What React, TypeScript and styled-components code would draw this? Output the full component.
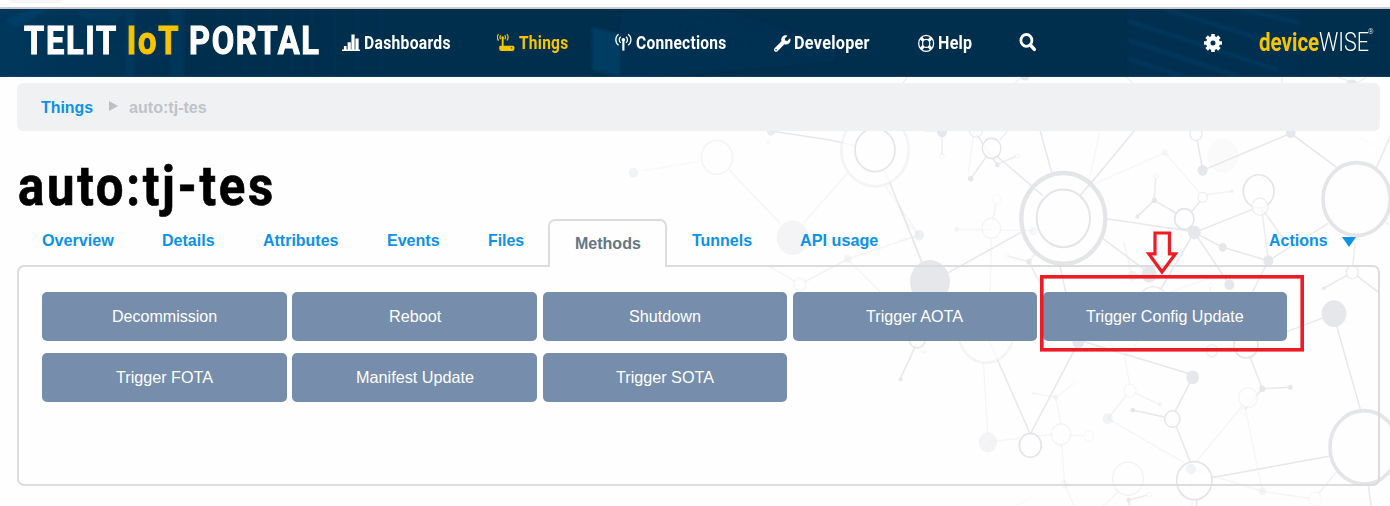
import React, { useLayoutEffect, useRef, useState } from "react";
import styled, { createGlobalStyle } from "styled-components";
import { FaWrench } from "react-icons/fa";

const GlobalStyle = createGlobalStyle`
  * { box-sizing: border-box; }
  html, body { margin: 0; padding: 0; background: #fff; }
  body { font-family: "Liberation Sans", Arial, sans-serif; overflow: hidden; }
`;

const Page = styled.div`
  position: relative;
  width: 1390px;
  height: 506px;
  overflow: hidden;
  background: #fefefe;
`;

const FitBox = styled.span<{ $w: number }>`
  display: inline-block;
  width: ${(p) => p.$w}px;
  white-space: nowrap;
`;
const FitInner = styled.span`
  display: inline-block;
  transform-origin: 0 50%;
`;
function Fit({ w, children }: { w: number; children: React.ReactNode }) {
  const ref = useRef<HTMLSpanElement>(null);
  const [scale, setScale] = useState(1);
  useLayoutEffect(() => {
    if (ref.current) setScale(w / ref.current.offsetWidth);
  }, [w]);
  return (
    <FitBox $w={w}>
      <FitInner ref={ref} style={{ transform: `scaleX(${scale})` }}>
        {children}
      </FitInner>
    </FitBox>
  );
}

const Backdrop = styled.svg`
  position: absolute;
  inset: 0;
  width: 1390px;
  height: 506px;
`;

const Content = styled.div`
  position: relative;
  display: flex;
  flex-direction: column;
`;

const BrowserEdge = styled.div`
  height: 9px;
  padding-left: 11px;
  background: #fff;
  border-bottom: 2px solid #c9cbce;
`;
const BrowserPill = styled.div`
  width: 50px;
  height: 3px;
  border-radius: 0 0 6px 6px;
  background: #f5f5f6;
`;

const Header = styled.header`
  position: relative;
  height: 68px;
  background: #002e4d;
  border-bottom: 1px solid #0b3d5e;
  overflow: hidden;
`;
const HeaderArt = styled.svg`
  position: absolute;
  inset: 0;
  width: 1390px;
  height: 68px;
`;
const HeaderGrid = styled.div`
  position: relative;
  height: 68px;
  padding-left: 24px;
  display: grid;
  grid-template-columns: 318px 155px 118px 159px 144px 101px 185px 55px 1fr;
  align-items: center;
  font-family: Roboto, sans-serif;
  color: #fff;
`;
const Logo = styled.div`
  font-size: 39px;
  line-height: 48px;
  font-weight: 700;
  letter-spacing: 2px;
  padding-bottom: 5px;
  -webkit-text-stroke: 1.1px currentColor;
`;
const Gold = styled.span`
  color: #f6c500;
`;
const NavItem = styled.a<{ $active?: boolean }>`
  display: flex;
  align-items: center;
  gap: 3px;
  height: 24px;
  font-size: 17.5px;
  line-height: 24px;
  font-weight: 700;
  letter-spacing: 0.3px;
  color: ${(p) => (p.$active ? "#f6c500" : "#fff")};
`;
const IconSlot = styled.span<{ $w: number }>`
  display: flex;
  flex: none;
  width: ${(p) => p.$w}px;
  height: 20px;
  align-items: center;
`;
const Brand = styled.div`
  display: flex;
  align-items: flex-start;
  height: 30px;
  font-size: 25px;
  line-height: 30px;
  font-weight: 300;
`;
const BrandBold = styled.span`
  font-weight: 700;
  color: #f6c500;
`;
const Registered = styled.span`
  font-size: 7px;
  line-height: 9px;
  margin-left: -1px;
`;

const Breadcrumb = styled.nav`
  margin: 6px 10px 0 17px;
  height: 48px;
  padding-left: 24px;
  display: flex;
  align-items: center;
  border-radius: 6px;
  background: #f0f1f3;
  font-size: 16.5px;
  font-weight: 700;
  color: #bdc3c8;
`;
const CrumbLink = styled.a`
  color: #0c92e6;
`;
const CrumbArrow = styled.span`
  width: 0;
  height: 0;
  margin: 0 11px 2px 16px;
  border-left: 9px solid #b9c0c6;
  border-top: 5.5px solid transparent;
  border-bottom: 5.5px solid transparent;
`;

const Title = styled.h1`
  margin: 22px 0 0 18px;
  height: 66px;
  font-family: Roboto, sans-serif;
  font-size: 55px;
  line-height: 66px;
  font-weight: 700;
  letter-spacing: 3px;
  color: #000;
  -webkit-text-stroke: 0.7px #000;
`;

const TabBar = styled.div`
  display: flex;
  align-items: flex-end;
  height: 48px;
  margin: 0 10px -2px 17px;
  padding-left: 25px;
  position: relative;
  z-index: 1;
  font-size: 16.5px;
  font-weight: 700;
  color: #0c92e6;
`;
const Tab = styled.a<{ $w: number }>`
  width: ${(p) => p.$w}px;
  height: 48px;
  line-height: 42px;
`;
const ActiveTab = styled.div`
  width: 119px;
  height: 48px;
  margin-right: 25px;
  padding-left: 25px;
  line-height: 44px;
  border: 2px solid #dcdcdc;
  border-bottom: 0;
  border-radius: 7px 7px 0 0;
  background: #fefefe;
  color: #657684;
`;
const Actions = styled.a`
  margin-left: auto;
  margin-right: 24px;
  height: 48px;
  display: flex;
  align-items: center;
  gap: 14px;
  padding-bottom: 6px;
`;
const Caret = styled.span`
  width: 0;
  height: 0;
  border-top: 10.5px solid #0c92e6;
  border-left: 7px solid transparent;
  border-right: 7px solid transparent;
  margin-top: 3px;
`;

const Panel = styled.section`
  margin: 0 10px 0 17px;
  height: 221px;
  padding: 25px 0 0 23.4px;
  border: 2px solid #dcdcdc;
  border-radius: 7px;
`;
const Methods = styled.div`
  display: grid;
  grid-template-columns: repeat(5, 244.6px);
  grid-auto-rows: 48.5px;
  column-gap: 5.5px;
  row-gap: 12.5px;
`;
const MethodButton = styled.button`
  border: 0;
  padding: 0;
  border-radius: 5px;
  background: #768eac;
  color: #fff;
  font-family: "Liberation Sans", Arial, sans-serif;
  font-size: 16.5px;
  text-align: center;
`;

const Annotation = styled.svg`
  position: absolute;
  left: 1036px;
  top: 226px;
  width: 272px;
  height: 130px;
`;

type Node = [x: number, y: number, r: number, stroke: number, opacity: number];
type Edge = [x1: number, y1: number, x2: number, y2: number, opacity: number];

/* Node: stroke 0 is a filled dot. Every cluster is drawn at three times its size. */
const upperEdges: Edge[] = [
  [455, 127, 420, 0, 1], [575, 157, 705, 0, 1], [540, 197, 578, 152, 1], [430, 198, 290, 78, 1],
  [290, 103, 352, 78, 0.8], [292, 105, 228, 10, 1], [212, 146, 262, 76, 1], [300, 30, 322, 3, 0.7],
  [126, 10, 126, 80, 0.8], [222, 0, 205, 130, 0.35], [600, 0, 570, 140, 0.25], [580, 163, 795, 68, 0.35],
  [795, 68, 900, 190, 0.35], [890, 20, 908, 121, 1], [908, 121, 1172, 10, 1], [1172, 10, 1310, 112, 1],
  [1430, 112, 1470, 20, 0.9], [767, 138, 763, 211, 0.8], [763, 211, 712, 260, 1], [763, 211, 830, 250, 1],
  [875, 245, 905, 208, 1], [910, 195, 996, 184, 0.5], [620, 266, 883, 305, 1], [890, 305, 1065, 235, 1],
  [1085, 235, 1105, 392, 0.8], [1085, 235, 1150, 325, 0.9], [883, 307, 968, 352, 1], [968, 352, 1105, 392, 1],
  [883, 307, 988, 464, 1], [1105, 392, 1285, 280, 0.9], [883, 307, 775, 490, 1], [803, 305, 748, 430, 0.4],
  [608, 325, 748, 430, 1], [145, 428, 362, 308, 1], [0, 230, 65, 395, 1], [170, 298, 400, 302, 0.35],
  [290, 208, 275, 290, 0.5], [274, 325, 270, 490, 0.35], [320, 377, 387, 395, 0.7], [387, 395, 410, 365, 0.8],
  [387, 395, 420, 460, 0.8], [480, 410, 498, 490, 1], [0, 333, 57, 316, 0.35], [57, 316, 15, 270, 0.3],
  [697, 437, 672, 340, 0.4], [697, 437, 800, 402, 0.3], [1105, 392, 1055, 490, 0.9], [1365, 340, 1358, 410, 0.8],
  [1357, 427, 1271, 475, 1], [1357, 427, 1437, 488, 1], [1470, 285, 1440, 268, 0.6], [932, 466, 930, 500, 0.4],
  [800, 490, 940, 440, 0.3], [75, 3, 126, 3, 0.7], [1370, 20, 1470, 70, 0.15],
];
const upperNodes: Node[] = [
  [490, 265, 126, 13, 1], [490, 265, 80, 6, 1], [1370, 207, 101, 11, 1], [275, 55, 28, 4, 1],
  [228, 0, 20, 4, 0.7], [126, 6, 15, 0, 1], [126, 80, 7, 2, 0.6], [292, 104, 7, 0, 1],
  [352, 78, 6, 2, 0.5], [212, 146, 8, 0, 1], [888, 12, 18, 4, 0.8], [969, 77, 47, 0, 0.15],
  [908, 121, 15, 0, 1], [1172, 8, 15, 0, 1], [795, 68, 10, 0, 0.25], [767, 138, 6, 2, 0.5],
  [763, 211, 8, 0, 1], [712, 260, 6, 0, 0.9], [908, 202, 14, 3, 0.8], [996, 184, 5, 0, 0.5],
  [853, 267, 29, 5, 1], [883, 307, 19, 0, 1], [1076, 184, 46, 5, 1], [1080, 230, 24, 4, 0.6],
  [968, 352, 12, 0, 1], [1105, 392, 15, 0, 1], [988, 464, 15, 0, 1], [748, 433, 23, 0, 1],
  [697, 437, 14, 0, 0.5], [672, 340, 4, 0, 0.3], [90, 455, 60, 0, 1], [290, 208, 13, 2, 0.4],
  [274, 295, 28, 4, 0.4], [170, 298, 7, 0, 0.4], [400, 303, 12, 0, 0.3], [57, 316, 15, 0, 0.5],
  [320, 377, 6, 2, 0.4], [387, 395, 8, 0, 0.9], [1357, 427, 18, 4, 0.7], [1271, 475, 6, 0, 0.8],
  [932, 466, 7, 2, 0.4], [760, 520, 46, 4, 0.8], [-75, 60, 101, 8, 0.4], [-75, 60, 60, 5, 1],
];
const lowerEdges: Edge[] = [
  [0, 238, 48, 135, 1], [265, 118, 391, 402, 1], [391, 402, 535, 128, 1], [535, 120, 878, 224, 1],
  [878, 232, 825, 335, 1], [698, 330, 795, 352, 1], [828, 378, 872, 488, 1], [1160, 95, 1280, 50, 1],
  [1310, 78, 1383, 335, 1], [1048, 165, 1087, 266, 1], [1087, 266, 1171, 262, 1], [1087, 266, 1030, 335, 0.9],
  [935, 533, 1290, 468, 1], [1405, 555, 1413, 618, 1], [1310, 515, 1248, 590, 0.5], [873, 507, 1087, 574, 0.4],
  [1087, 574, 1246, 597, 0.4], [1035, 320, 1087, 574, 0.3], [1035, 308, 885, 490, 0.4], [623, 356, 873, 500, 0.4],
  [623, 356, 690, 272, 0.5], [690, 272, 780, 314, 0.5], [672, 160, 690, 260, 0.35], [467, 292, 525, 248, 0.3],
  [400, 280, 467, 292, 0.4], [467, 292, 483, 375, 0.35], [483, 403, 566, 408, 0.4], [270, 425, 460, 403, 0.35],
  [250, 185, 263, 400, 0.35], [485, 435, 494, 553, 0.35], [494, 553, 522, 618, 0.35], [390, 595, 350, 618, 0.2],
  [655, 575, 610, 618, 0.35], [686, 600, 747, 584, 0.8], [686, 600, 688, 618, 1], [890, 600, 890, 618, 0.9],
  [875, 515, 876, 618, 0.3], [936, 152, 1010, 140, 0.5],
];
const lowerNodes: Node[] = [
  [52, 118, 24, 4, 1], [2, 238, 6, 0, 1], [74, 157, 5, 0, 0.35], [258, 100, 82, 8, 0.4],
  [535, 125, 18, 0, 1], [670, 118, 40, 4, 0.2], [936, 152, 17, 4, 0.6], [1038, 135, 36, 5, 1],
  [1302, 41, 37, 0, 1], [878, 232, 19, 0, 1], [817, 357, 23, 4, 1], [698, 330, 7, 0, 1],
  [690, 272, 18, 3, 0.4], [780, 314, 6, 0, 0.4], [623, 356, 15, 0, 0.5], [391, 436, 33, 5, 1],
  [264, 427, 28, 0, 0.4], [483, 403, 29, 4, 0.4], [566, 408, 14, 3, 0.3], [467, 292, 8, 0, 0.3],
  [400, 280, 5, 0, 0.3], [525, 248, 8, 2, 0.2], [1044, 293, 28, 4, 0.35], [1087, 266, 9, 0, 1],
  [1171, 262, 7, 0, 1], [1030, 335, 8, 2, 0.4], [1392, 442, 102, 11, 1], [883, 542, 53, 5, 1],
  [873, 507, 15, 0, 0.5], [684, 536, 46, 4, 0.45], [494, 553, 12, 0, 0.25], [1087, 574, 11, 0, 0.4],
  [1246, 597, 19, 3, 0.35], [686, 600, 7, 0, 0.9], [747, 584, 7, 2, 0.5], [390, 595, 6, 2, 0.2],
];
const leftEdges: Edge[] = [
  [550, 92, 718, 64, 0.2], [808, 90, 960, 250, 0.4], [1030, 250, 1162, 100, 0.4], [1275, 92, 1385, 365, 1],
  [1275, 138, 1378, 285, 0.35], [1019, 434, 1163, 357, 0.5], [1163, 357, 1370, 288, 0.4],
  [1163, 357, 1260, 455, 0.4], [930, 380, 1005, 424, 0.4], [1110, 0, 1190, 18, 1], [933, -27, 1110, 0, 1],
];
const leftNodes: Node[] = [
  [520, 98, 14, 0, 0.45], [771, 52, 47, 5, 0.4], [998, 293, 48, 0, 0.4], [1163, 357, 11, 0, 0.4],
  [1019, 434, 18, 4, 0.35], [925, 5, 7, 0, 0.2], [933, -27, 13, 0, 0.8], [1378, 285, 14, 0, 0.25],
];

function Cluster({ x, y, edges, nodes }: { x: number; y: number; edges: Edge[]; nodes: Node[] }) {
  return (
    <g transform={`translate(${x} ${y}) scale(0.33333)`}>
      {edges.map(([x1, y1, x2, y2, o], i) => (
        <line key={i} x1={x1} y1={y1} x2={x2} y2={y2} stroke="#e7e8eb" strokeOpacity={o} strokeWidth={4.5} />
      ))}
      {nodes.map(([cx, cy, r, s, o], i) =>
        s ? (
          <ellipse key={i} cx={cx} cy={cy} rx={r} ry={r * 1.08} fill={r === 126 ? "none" : "#fefefe"} fillOpacity={r < 20 ? 1 : 0.75} stroke="#e3e5e9" strokeOpacity={o} strokeWidth={s} />
        ) : (
          <ellipse key={i} cx={cx} cy={cy} rx={r} ry={r * 1.08} fill="#e5e7ea" fillOpacity={o} />
        )
      )}
    </g>
  );
}

const BarsIcon = () => (
  <svg width="20" height="20" viewBox="0 0 20 20" fill="currentColor">
    <path d="M0 16.8h19v1.7H0zM2 13.2h2.8v3.6H2zM5.9 9.2h3.4v7.6H5.9zM9.9 1h3.4v15.8H9.9zM14.1 5.2h3.4v11.6h-3.4z" />
  </svg>
);
const RouterIcon = () => (
  <svg width="20" height="20" viewBox="0 0 20 20" fill="none" stroke="currentColor" strokeWidth="1.3">
    <path d="M1.7 .6C-.1 2.5-.1 5.7 1.7 7.4M4 2c-1 1.1-1 2.8 0 4M10.4 .6c1.8 1.9 1.8 5.1 0 6.8M8.1 2c1 1.1 1 2.8 0 4" />
    <path d="M6 4.5v9.5" strokeWidth="2" />
    <circle cx="6" cy="4.1" r="1.3" fill="currentColor" stroke="none" />
    <path fillRule="evenodd" fill="currentColor" stroke="none" d="M3.6 12.8h13.2a1.6 1.6 0 0 1 1.6 1.6V16a2.4 2.4 0 0 1-2.4 2.4H4.7A2.4 2.4 0 0 1 2.3 16v-1.7a1.5 1.5 0 0 1 1.3-1.5zm11 1.7v1.2h1.4v-1.2z" />
  </svg>
);
const AntennaIcon = () => (
  <svg width="20" height="20" viewBox="0 0 20 20" fill="none" stroke="currentColor" strokeWidth="1.4">
    <path d="M4 .4C-.1 3.3-.1 9.7 4 12.6M6.3 3c-2.1 1.8-2.1 5 0 6.8M14.6.4c4.1 2.9 4.1 9.3 0 12.2M12.3 3c2.1 1.8 2.1 5 0 6.8" />
    <circle cx="9.3" cy="6.4" r="2" fill="currentColor" stroke="none" />
    <path d="M9.3 7v11.5" strokeWidth="2.4" />
  </svg>
);
const HelpIcon = () => (
  <svg width="17" height="19" viewBox="0 0 17 19" fill="none" stroke="currentColor">
    <ellipse cx="8.4" cy="9.4" rx="7.7" ry="8.3" strokeWidth="1.3" />
    <ellipse cx="8.4" cy="9.4" rx="3.7" ry="4.1" strokeWidth="1.3" />
    <path d="M3.1 3.7l2.6 2.9M13.7 3.7l-2.6 2.9M3.1 15.1l2.6-2.9M13.7 15.1l-2.6-2.9" strokeWidth="3.2" />
  </svg>
);
const SearchIcon = () => (
  <svg width="20" height="20" viewBox="0 0 20 20" fill="none" stroke="currentColor">
    <ellipse cx="7.4" cy="7.4" rx="5.5" ry="5.9" strokeWidth="2.8" />
    <path d="M11.6 12.2l3.7 4.2" strokeWidth="3.5" strokeLinecap="round" />
  </svg>
);
const GearIcon = () => (
  <svg width="18" height="20" viewBox="-9 -10 18 20" fill="none" stroke="currentColor">
    <circle r="4.7" strokeWidth="4.4" />
    {[0, 45, 90, 135].map((a) => (
      <path key={a} d="M0-9V-6M0 9V6" transform={`rotate(${a})`} strokeWidth="3.6" />
    ))}
  </svg>
);

const HeaderTexture = () => (
  <HeaderArt viewBox="0 0 1390 68">
    <defs>
      <filter id="soft"><feGaussianBlur stdDeviation="1.6" /></filter>
      <linearGradient id="edge" x1="0" x2="1">
        <stop offset="0" stopColor="#00406a" />
        <stop offset="1" stopColor="#00406a" stopOpacity="0.15" />
      </linearGradient>
    </defs>
    <rect width="185" height="68" fill="url(#edge)" opacity="0.5" />
    <g filter="url(#soft)">
      <path d="M5 12L30 0h20L16 18z" fill="#004c7a" opacity=".4" />
      <path d="M75 0h50l-8 14-35-4zM125 0h10v68h-10zM170 0h14v68h-14z" fill="#004570" opacity=".3" />
      <path d="M40 40q45-20 80 0t60 0M60 68q50-40 75-30" stroke="#004570" fill="none" opacity=".4" />
      <path d="M218 0v68M245 0v68M270 0v68M292 0v68M312 0v68M335 0v68M357 0v68M381 0v68" stroke="#003c60" strokeWidth="2" opacity=".4" />
      <path d="M592 18l28 7v42l-28-6z" fill="#003f68" opacity=".85" />
      <path d="M625 0h90l120 34v18L650 68h-30V12z" fill="#003b61" opacity=".3" />
      <path d="M690 5l110 24M670 15l140 35" stroke="#002540" strokeWidth="5" strokeDasharray="3 6" opacity=".35" />
      <path d="M1128 12l150 49M1128 31l112 37M1128 50l58 18M1165 0l135 42M1240 0l60 14" stroke="#003f68" strokeWidth="3" opacity=".7" />
      <path d="M1128 0h172v68h-172z" fill="#003b61" opacity=".2" />
    </g>
  </HeaderArt>
);

const methods: [string, number][] = [
  ["Decommission", 105], ["Reboot", 52], ["Shutdown", 71.5], ["Trigger AOTA", 97], ["Trigger Config Update", 158],
  ["Trigger FOTA", 97], ["Manifest Update", 118], ["Trigger SOTA", 98],
];

export default function App() {
  return (
    <Page>
      <GlobalStyle />
      <Backdrop viewBox="0 0 1390 506">
        <g stroke="#e6e8ea" fill="none">
          <path d="M907 77l-4 6M1126 77l8 7M1282 77v6M1338 77l18 7M1366 77l-10 7M1014 84l8-7" />
          <ellipse cx="1352" cy="84" rx="5" ry="4" fill="#e6e8ea" />
          <ellipse cx="1025" cy="77" rx="4" ry="3" fill="#e6e8ea" />
        </g>
        <Cluster x={460} y={140} edges={leftEdges} nodes={leftNodes} />
        <Cluster x={900} y={130} edges={upperEdges} nodes={upperNodes} />
        <Cluster x={900} y={300} edges={lowerEdges} nodes={lowerNodes} />
      </Backdrop>
      <Content>
        <BrowserEdge><BrowserPill /></BrowserEdge>
        <Header>
          <HeaderTexture />
          <HeaderGrid>
            <Logo><Fit w={297}>TELIT <Gold>IoT</Gold> PORTAL</Fit></Logo>
            <NavItem><IconSlot $w={19}><BarsIcon /></IconSlot><Fit w={87}>Dashboards</Fit></NavItem>
            <NavItem $active><IconSlot $w={19}><RouterIcon /></IconSlot><Fit w={49.5}>Things</Fit></NavItem>
            <NavItem><IconSlot $w={18}><AntennaIcon /></IconSlot><Fit w={90.5}>Connections</Fit></NavItem>
            <NavItem><IconSlot $w={16.5}><FaWrench size={17} /></IconSlot><Fit w={76}>Developer</Fit></NavItem>
            <NavItem><IconSlot $w={16.5}><HelpIcon /></IconSlot><Fit w={34}>Help</Fit></NavItem>
            <NavItem><SearchIcon /></NavItem>
            <NavItem><GearIcon /></NavItem>
            <Brand>
              <BrandBold><Fit w={60}>device</Fit></BrandBold>
              <Fit w={50}>WISE</Fit>
              <Registered>®</Registered>
            </Brand>
          </HeaderGrid>
        </Header>
        <Breadcrumb>
          <CrumbLink><Fit w={52}>Things</Fit></CrumbLink>
          <CrumbArrow />
          <Fit w={78}>auto:tj-tes</Fit>
        </Breadcrumb>
        <Title><Fit w={258}>auto:tj-tes</Fit></Title>
        <TabBar>
          <Tab $w={119.5}><Fit w={71.5}>Overview</Fit></Tab>
          <Tab $w={101}><Fit w={52.5}>Details</Fit></Tab>
          <Tab $w={124.5}><Fit w={75.5}>Attributes</Fit></Tab>
          <Tab $w={101}><Fit w={52.5}>Events</Fit></Tab>
          <Tab $w={60}><Fit w={36.5}>Files</Fit></Tab>
          <ActiveTab><Fit w={66}>Methods</Fit></ActiveTab>
          <Tab $w={108}><Fit w={60}>Tunnels</Fit></Tab>
          <Tab $w={100}><Fit w={78.5}>API usage</Fit></Tab>
          <Actions><Fit w={59}>Actions</Fit><Caret /></Actions>
        </TabBar>
        <Panel>
          <Methods>
            {methods.map(([label, w]) => (
              <MethodButton key={label}><Fit w={w}>{label}</Fit></MethodButton>
            ))}
          </Methods>
        </Panel>
      </Content>
      <Annotation viewBox="1036 226 272 130" fill="none" stroke="#ed1c24" strokeWidth="3.6">
        <rect x="1041.8" y="276.8" width="260.4" height="73" />
        <path d="M1155 233h14.4v20.8h6L1162 272l-13.2-18.2h6.2z" strokeWidth="3.2" />
      </Annotation>
    </Page>
  );
}
